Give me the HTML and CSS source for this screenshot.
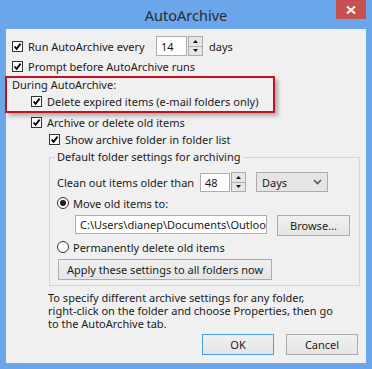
FILE: index.html
```html
<!DOCTYPE html>
<html lang="en">
<head>
  <meta charset="UTF-8">
  <title>AutoArchive</title>
  <link rel="stylesheet" href="styles.css">
</head>
<body>
  <div class="window">
    <div class="titlebar">
      <span class="title">AutoArchive</span>
      <span class="close">
        <svg width="10" height="8" viewBox="0 0 10 8"><path d="M1 0.5 L9 7.5 M9 0.5 L1 7.5" stroke="#fff" stroke-width="2"/></svg>
      </span>
    </div>

    <div class="content">
      <!-- Opciones generales -->
      <div class="row row-tall">
        <span class="check"><svg viewBox="0 0 9 9"><path d="M1.5 4.5 L3.6 6.8 L7.6 1.6" fill="none" stroke="#000" stroke-width="1.8"/></svg></span>
        <span class="label-run">Run AutoArchive every</span>
        <span class="textbox num">14</span>
        <span class="spin">
          <span class="spin-btn"><svg width="5" height="3" viewBox="0 0 5 3"><path d="M0 3 L2.5 0 L5 3 Z" fill="#111"/></svg></span>
          <span class="spin-btn"><svg width="5" height="3" viewBox="0 0 5 3"><path d="M0 0 L2.5 3 L5 0 Z" fill="#111"/></svg></span>
        </span>
        <span class="unit">days</span>
      </div>
      <div class="row row-prompt">
        <span class="check"><svg viewBox="0 0 9 9"><path d="M1.5 4.5 L3.6 6.8 L7.6 1.6" fill="none" stroke="#000" stroke-width="1.8"/></svg></span>
        <span>Prompt before AutoArchive runs</span>
      </div>

      <!-- Bloque resaltado -->
      <div class="during">
        <div class="during-title">During AutoArchive:</div>
        <div class="row indent-1 row-gap1">
          <span class="check"><svg viewBox="0 0 9 9"><path d="M1.5 4.5 L3.6 6.8 L7.6 1.6" fill="none" stroke="#000" stroke-width="1.8"/></svg></span>
          <span>Delete expired items (e-mail folders only)</span>
        </div>
      </div>

      <div class="row indent-1 row-gap1">
        <span class="check"><svg viewBox="0 0 9 9"><path d="M1.5 4.5 L3.6 6.8 L7.6 1.6" fill="none" stroke="#000" stroke-width="1.8"/></svg></span>
        <span>Archive or delete old items</span>
      </div>
      <div class="row indent-2 row-gap1">
        <span class="check"><svg viewBox="0 0 9 9"><path d="M1.5 4.5 L3.6 6.8 L7.6 1.6" fill="none" stroke="#000" stroke-width="1.8"/></svg></span>
        <span>Show archive folder in folder list</span>
      </div>

      <fieldset class="group">
        <legend>Default folder settings for archiving</legend>
        <div class="row row-tall">
          <span class="label-clean">Clean out items older than</span>
          <span class="textbox num num-48">48</span>
          <span class="spin">
            <span class="spin-btn"><svg width="5" height="3" viewBox="0 0 5 3"><path d="M0 3 L2.5 0 L5 3 Z" fill="#111"/></svg></span>
            <span class="spin-btn"><svg width="5" height="3" viewBox="0 0 5 3"><path d="M0 0 L2.5 3 L5 0 Z" fill="#111"/></svg></span>
          </span>
          <span class="select">
            <span>Days</span>
            <svg width="9" height="6" viewBox="0 0 9 6"><path d="M1 1 L4.5 4.5 L8 1" fill="none" stroke="#555" stroke-width="1.6"/></svg>
          </span>
        </div>
        <div class="row row-radio">
          <span class="radio on"></span>
          <span>Move old items to:</span>
        </div>
        <div class="path-row">
          <span class="textbox path">C:\Users\dianep\Documents\Outloo</span>
          <span class="btn browse">Browse...</span>
        </div>
        <div class="row row-radio">
          <span class="radio"></span>
          <span>Permanently delete old items</span>
        </div>
        <span class="btn apply">Apply these settings to all folders now</span>
      </fieldset>

      <p class="note">To specify different archive settings for any folder,<br>right-click on the folder and choose Properties, then go<br>to the AutoArchive tab.</p>

      <div class="actions">
        <span class="btn default">OK</span>
        <span class="btn">Cancel</span>
      </div>
    </div>
  </div>
</body>
</html>
```

FILE: styles.css
```css
body {
  margin: 0;
  font-family: "Noto Sans", "Open Sans", sans-serif;
  font-size: 11px;
  color: #1b1b1b;
}
.window {
  width: 372px;
  height: 369px;
  box-sizing: border-box;
  padding: 0 6px 6px;
  background: #6aa6e9;
  display: flex;
  flex-direction: column;
}
.titlebar {
  position: relative;
  height: 29px;
  display: flex;
  align-items: center;
  justify-content: center;
  font-size: 14.5px;
  color: #2b2b2b;
}
.close {
  position: absolute;
  right: 0;
  top: 0;
  width: 30px;
  height: 19px;
  background: #c75050;
  display: flex;
  align-items: center;
  justify-content: center;
}
.content {
  flex: 1;
  background: #f0f0f0;
  padding: 7px 8px 0 6px;
}
.row {
  display: flex;
  align-items: center;
  height: 16px;
  white-space: nowrap;
}
.row-tall {
  height: 20px;
}
.row-prompt {
  margin-top: 2px;
}
.row-gap1 {
  margin-top: 1px;
}
.indent-1 {
  margin-left: 19px;
}
.indent-2 {
  margin-left: 37px;
}
.check {
  width: 11px;
  height: 11px;
  box-sizing: border-box;
  border: 1px solid #333;
  background: #fff;
  margin-right: 5px;
  flex: none;
  display: flex;
}
.check svg {
  width: 9px;
  height: 9px;
}
.label-run {
  width: 128px;
}
.textbox {
  box-sizing: border-box;
  background: #fff;
  border: 1px solid #abadb3;
  display: flex;
  align-items: center;
  padding-left: 4px;
}
.num {
  width: 31px;
  height: 20px;
}
.num-48 {
  width: 30px;
  height: 19px;
}
.spin {
  display: flex;
  flex-direction: column;
  margin-left: 1px;
  height: 20px;
  width: 15px;
}
.spin-btn {
  flex: 1;
  box-sizing: border-box;
  border: 1px solid #acacac;
  background: #e6e6e6;
  display: flex;
  align-items: center;
  justify-content: center;
}
.spin-btn + .spin-btn {
  border-top: none;
}
.unit {
  margin-left: 6px;
}
.during {
  margin: 2px 0 0 -7px;
  width: 270px;
  box-sizing: border-box;
  border: 2px solid #c1121f;
  padding: 0 0 2px 5px;
  box-shadow: 3px 3px 4px rgba(0, 0, 0, 0.28);
}
.during-title {
  height: 14px;
  line-height: 14px;
}
.group {
  margin: 3px 0 0 37px;
  width: 311px;
  box-sizing: border-box;
  border: 1px solid #d5d5d5;
  padding: 8px 0 5px 7px;
}
.group legend {
  padding: 0 2px;
  margin-left: -2px;
  line-height: 14px;
}
.label-clean {
  width: 143px;
}
.select {
  margin-left: 10px;
  width: 72px;
  height: 20px;
  box-sizing: border-box;
  border: 1px solid #acacac;
  background: #e5e5e5;
  display: flex;
  align-items: center;
  justify-content: space-between;
  padding: 0 5px;
}
.row-radio {
  height: 14px;
  margin-top: 4px;
}
.radio {
  width: 12px;
  height: 12px;
  box-sizing: border-box;
  border: 1px solid #333;
  border-radius: 50%;
  background: #fff;
  margin-right: 4px;
  flex: none;
  display: flex;
  align-items: center;
  justify-content: center;
}
.radio.on::after {
  content: "";
  width: 6px;
  height: 6px;
  border-radius: 50%;
  background: #1b1b1b;
}
.path-row {
  display: flex;
  align-items: flex-start;
  margin: 5px 0 0 18px;
}
.path {
  width: 192px;
  height: 19px;
  overflow: hidden;
  white-space: nowrap;
}
.btn {
  box-sizing: border-box;
  height: 21px;
  border: 1px solid #acacac;
  background: linear-gradient(#f0f0f0, #e5e5e5);
  display: flex;
  align-items: center;
  justify-content: center;
  white-space: nowrap;
}
.browse {
  width: 73px;
  margin-left: 10px;
}
.apply {
  width: 214px;
  margin: 5px 0 0 1px;
}
.note {
  margin: 5px 0 0 36px;
  line-height: 13px;
}
.actions {
  display: flex;
  justify-content: flex-end;
  gap: 12px;
  margin-top: 4px;
}
.actions .btn {
  width: 72px;
}
.btn.default {
  border-color: #4a9ded;
}
```
